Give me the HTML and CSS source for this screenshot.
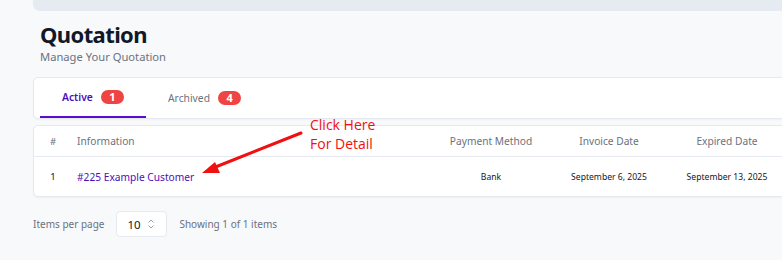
FILE: index.html
```html
<!DOCTYPE html>
<html lang="en">
  <head>
    <meta charset="UTF-8" />
    <meta name="viewport" content="width=device-width, initial-scale=1.0" />
    <title>Quotation</title>
    <link rel="stylesheet" href="styles.css">
  </head>
  <body>
    <div class="page">
      <div class="topbar"></div>

      <header class="heading">
        <h1>Quotation</h1>
        <p>Manage Your Quotation</p>
      </header>

      <nav class="tabs card">
        <a class="tab active">Active <span class="badge">1</span></a>
        <a class="tab">Archived <span class="badge">4</span></a>
      </nav>

      <div class="table card">
        <div class="row head">
          <div class="c-num">#</div>
          <div class="c-info">Information</div>
          <div class="c-mid">Payment Method</div>
          <div class="c-mid">Invoice Date</div>
          <div class="c-mid">Expired Date</div>
        </div>
        <div class="row">
          <div class="c-num">1</div>
          <div class="c-info"><a class="link">#225 Example Customer</a></div>
          <div class="c-mid">Bank</div>
          <div class="c-mid">September 6, 2025</div>
          <div class="c-mid">September 13, 2025</div>
        </div>

        <!-- hint overlay -->
        <div class="hint">Click Here<br />For Detail</div>
        <svg class="hint-arrow" width="110" height="54" viewBox="0 0 110 54">
          <line x1="100" y1="8" x2="12" y2="43" stroke="#f01010" stroke-width="3" stroke-linecap="round" />
          <polygon points="1,48 14,37 19,48" fill="#f01010" />
        </svg>
      </div>

      <footer class="pager">
        <span>Items per page</span>
        <div class="select">
          <span>10</span>
          <svg width="8" height="12" viewBox="0 0 8 12">
            <path d="M1.5 4.5 L4 2 L6.5 4.5 M1.5 7.5 L4 10 L6.5 7.5" fill="none" stroke="#9ca3af" stroke-width="1" />
          </svg>
        </div>
        <span>Showing 1 of 1 items</span>
      </footer>
    </div>
  </body>
</html>
```

FILE: styles.css
```css
html {
  font-family: "Noto Sans", "Open Sans", sans-serif;
  background: #f8f9fb;
}

body {
  margin: 0;
  overflow: hidden;
}

.page {
  width: 900px;
  padding-left: 33px;
}

.topbar {
  height: 11px;
  background: #e6eaf1;
  border-bottom-left-radius: 7px;
}

/* heading */
.heading {
  padding: 8px 0 0 7px;
  height: 58px;
}
.heading h1 {
  margin: 0;
  font-size: 22px;
  line-height: 30px;
  font-weight: 700;
  letter-spacing: -0.6px;
  color: #111827;
}
.heading p {
  margin: 0;
  font-size: 11.2px;
  line-height: 16px;
  color: #6b7280;
}

.card {
  background: #ffffff;
  border: 1px solid #e6e9ef;
  border-radius: 5px;
  box-shadow: 0 1px 2px rgba(0, 0, 0, 0.04);
}

/* tabs */
.tabs {
  display: flex;
  height: 40px;
  padding-left: 6px;
}
.tab {
  display: flex;
  align-items: center;
  gap: 8px;
  width: 106px;
  box-sizing: border-box;
  padding-left: 22px;
  font-size: 10.3px;
  color: #6b7280;
  border-bottom: 2px solid transparent;
}
.tab.active {
  color: #4c0fb8;
  font-weight: 600;
  border-bottom-color: #5a0ccc;
}
.tab:not(.active) {
  padding-top: 2px;
}
.badge {
  background: #ef4444;
  color: #ffffff;
  font-size: 11px;
  font-weight: 700;
  line-height: 14px;
  padding: 0 8.5px;
  border-radius: 7px;
}

/* table */
.table {
  position: relative;
  margin-top: 6px;
}
.row {
  display: grid;
  grid-template-columns: 38px 360px 118px 118px 118px auto;
  align-items: center;
  height: 39px;
  font-size: 8.6px;
  color: #111827;
}
.row.head {
  height: 30px;
  font-size: 10.2px;
  color: #6b7280;
  border-bottom: 1px solid #e6e9ef;
}
.c-num {
  text-align: center;
}
.c-info {
  padding-left: 5px;
}
.c-mid {
  text-align: center;
}
.link {
  font-size: 10.2px;
  color: #4c0fb8;
}
.row .c-num {
  font-size: 9.5px;
}

.hint {
  position: absolute;
  left: 276px;
  top: -11px;
  font-family: "Open Sans", sans-serif;
  font-size: 14px;
  line-height: 19px;
  color: #f01010;
}
.hint-arrow {
  position: absolute;
  left: 167px;
  top: -1px;
}

/* pager */
.pager {
  display: flex;
  align-items: center;
  gap: 12px;
  margin-top: 14px;
  font-size: 10px;
  color: #6b7280;
}
.select {
  display: flex;
  align-items: center;
  justify-content: space-between;
  width: 51px;
  height: 26px;
  box-sizing: border-box;
  padding: 0 11px 0 10px;
  background: #ffffff;
  border: 1px solid #e6e9ef;
  border-radius: 4px;
  font-size: 11.5px;
  color: #111827;
}
```
